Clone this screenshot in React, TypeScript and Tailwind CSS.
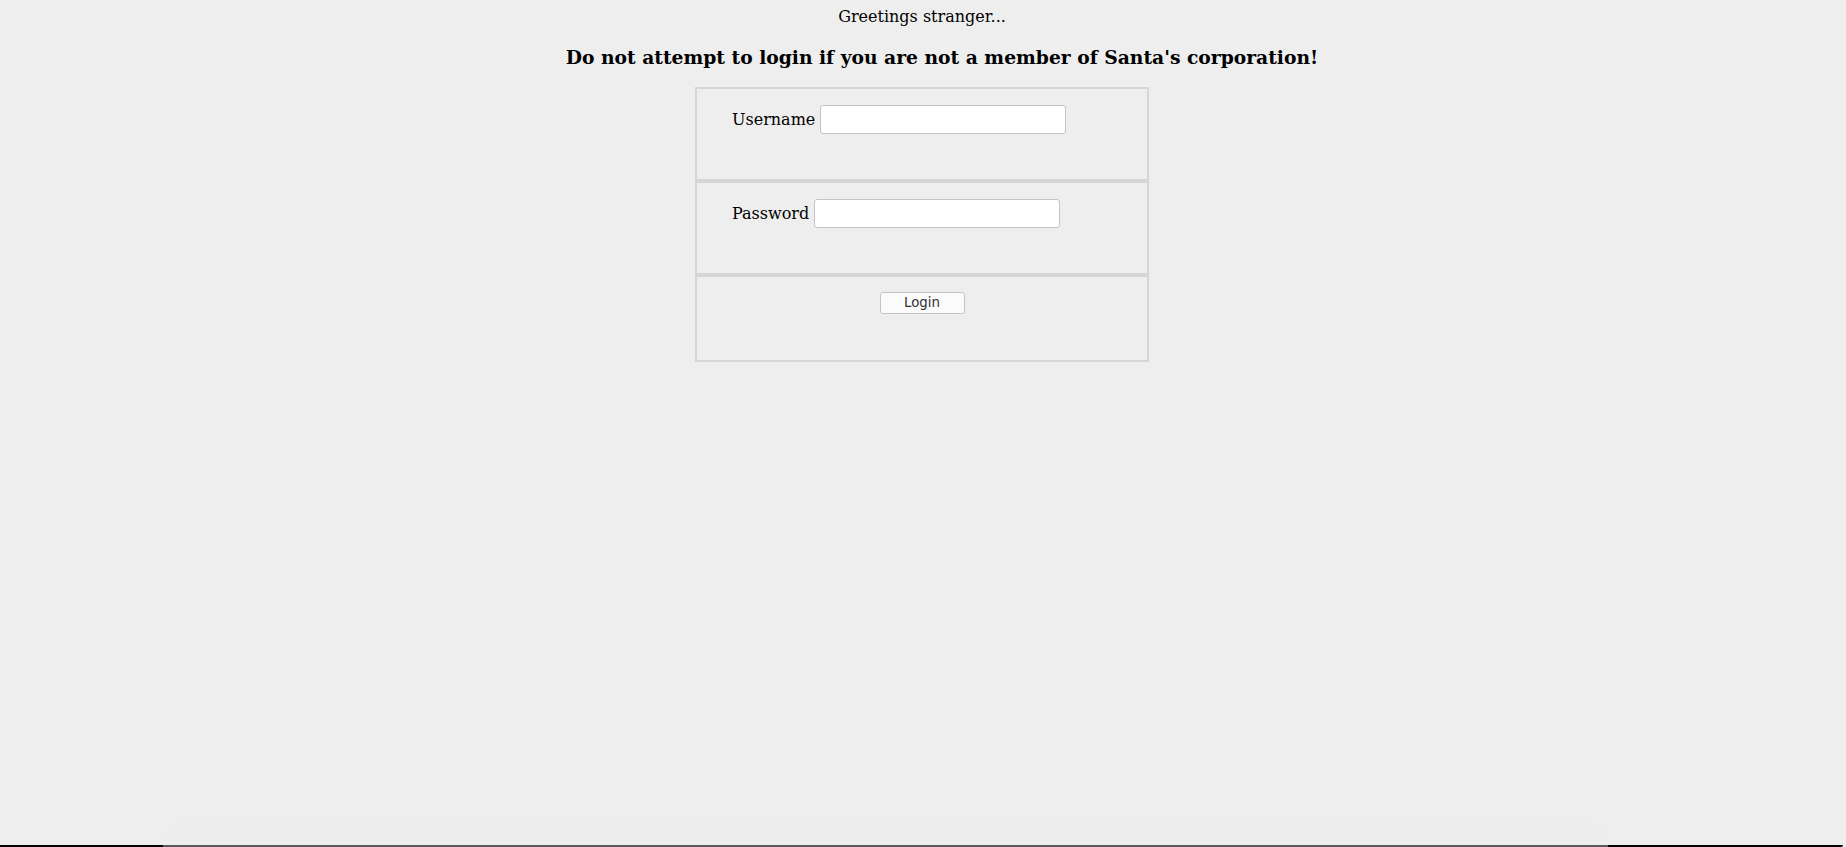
export default function App() {
  return (
    <div className="relative min-h-screen bg-[#eeeeee] text-black" style={{ fontFamily: '"DejaVu Serif", serif' }}>
      <div className="flex flex-col items-center pt-[7px]">
        <p className="mr-[2px] text-[16px] leading-[19px]">Greetings stranger...</p>
        <h3 className="mt-[20px] pl-[38px] text-[18.72px] font-bold leading-[22px]">
          Do not attempt to login if you are not a member of Santa's corporation!
        </h3>
        <form className="mr-[2px] mt-[19px] flex w-[454px] flex-col" onSubmit={(e) => e.preventDefault()}>
          <div className="h-[94px] border-2 border-[#d6d6d6] px-[35px] pt-[16px]">
            <label className="flex items-center gap-[5px] text-[16px]">
              <span>Username</span>
              <input
                type="text"
                className="h-[29px] w-[246px] rounded-[3px] border border-[#c4c4c4] bg-white px-1 outline-none"
              />
            </label>
          </div>
          <div className="h-[94px] border-2 border-[#d6d6d6] px-[35px] pt-[16px]">
            <label className="flex items-center gap-[5px] text-[16px]">
              <span>Password</span>
              <input
                type="password"
                className="h-[29px] w-[246px] rounded-[3px] border border-[#c4c4c4] bg-white px-1 outline-none"
              />
            </label>
          </div>
          <div className="flex h-[87px] justify-center border-2 border-[#d6d6d6] pt-[15px]">
            <button
              type="submit"
              className="h-[22px] w-[85px] rounded-[3px] border border-[#c4c4c4] bg-[#fbfbfb] text-[13.33px] leading-[20px] text-[#333333]"
              style={{ fontFamily: '"DejaVu Sans", sans-serif' }}
            >
              Login
            </button>
          </div>
        </form>
      </div>
      <div className="absolute bottom-0 left-0 right-[3px] h-[2px] rounded-br-[3px] bg-black" />
      <div className="absolute bottom-0 left-[163px] right-[238px] h-[2px] bg-[#5a5a5a] shadow-[0_-10px_30px_rgba(0,0,0,0.12)]" />
    </div>
  );
}
